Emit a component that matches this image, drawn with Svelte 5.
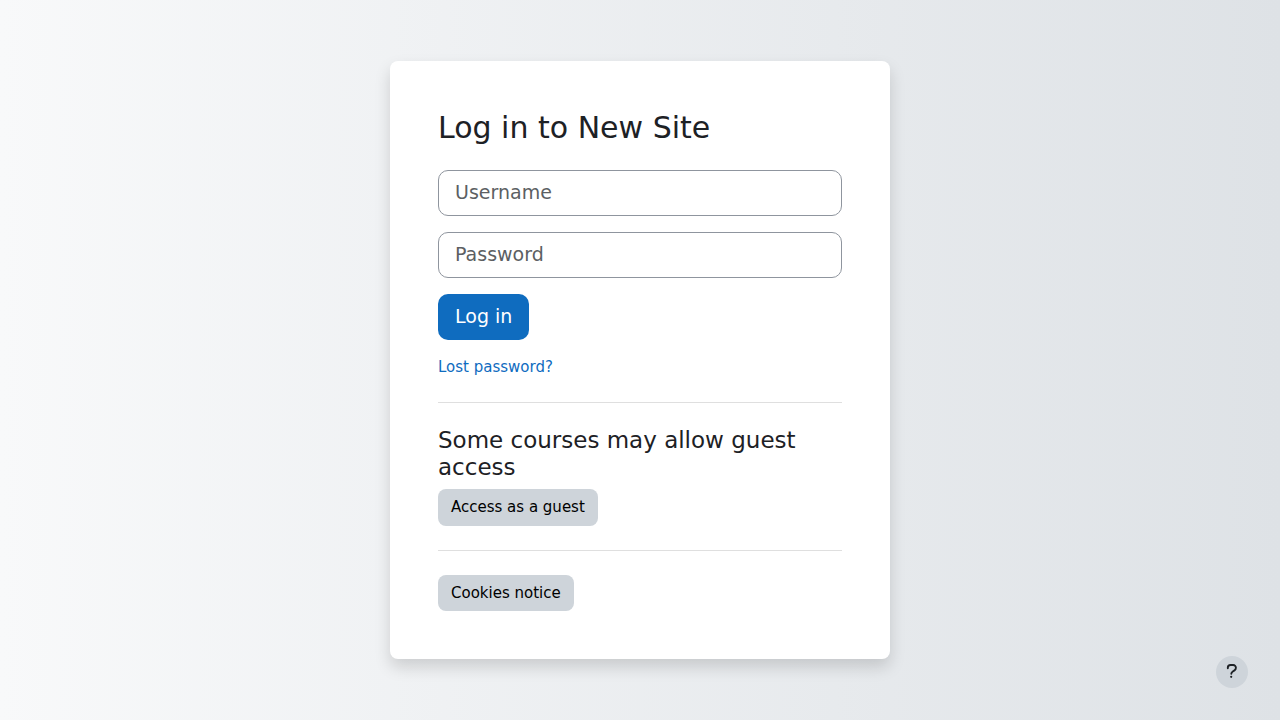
<script>
  let username = $state('');
  let password = $state('');
</script>

<div class="page">
  <main class="card">
    <h1>Log in to New Site</h1>
    <form onsubmit={(e) => e.preventDefault()}>
      <input type="text" aria-label="Username" placeholder="Username" autocomplete="username" bind:value={username} />
      <input type="password" aria-label="Password" placeholder="Password" autocomplete="current-password" bind:value={password} />
      <button class="btn primary" type="submit">Log in</button>
      <a href="#forgot">Lost password?</a>
    </form>
    <hr />
    <section>
      <h2>Some courses may allow guest access</h2>
      <button class="btn secondary" type="button">Access as a guest</button>
    </section>
    <hr />
    <button class="btn secondary" type="button">Cookies notice</button>
  </main>
  <button class="help" type="button" aria-label="Help">
    <svg viewBox="0 0 12 16" width="12" height="16" aria-hidden="true">
      <path d="M1.800 4.200V3.800A2.800 2.800 0 0 1 4.600 1H7.200A2.700 2.700 0 0 1 9.900 3.800C9.900 5 9.400 5.800 8.500 6.400L6.800 7.500C5.900 8.100 5.300 8.700 5.300 9.800" fill="none" stroke="currentColor" stroke-width="1.900" stroke-linecap="round" />
      <circle cx="5.200" cy="12.800" r="1.100" fill="currentColor" />
    </svg>
  </button>
</div>

<style>
  :global(body) {
    margin: 0;
  }
  .page {
    box-sizing: border-box;
    min-height: 100vh;
    display: flex;
    align-items: center;
    justify-content: center;
    padding: 24px;
    background: linear-gradient(to right, #f8f9fa, #dee2e6);
    color: #1d2125;
    font-family: "DejaVu Sans", sans-serif;
    font-size: 15px;
    line-height: 1.5;
  }
  .card {
    box-sizing: border-box;
    width: 100%;
    max-width: 500px;
    padding: 48px;
    border-radius: 8px;
    background: #fff;
    box-shadow: 0 8px 16px rgba(0, 0, 0, 0.15);
  }
  h1 {
    margin: 0 0 24px;
    font-size: 30px;
    font-weight: 400;
    line-height: 37px;
  }
  h2 {
    margin: 0 0 8px;
    font-size: 23px;
    font-weight: 400;
    line-height: 27px;
  }
  form {
    display: flex;
    flex-direction: column;
    align-items: flex-start;
    gap: 16px;
  }
  input,
  .primary {
    box-sizing: border-box;
    height: 46px;
    padding: 7px 16px 9px;
    border-radius: 10px;
    font: inherit;
    font-size: 19px;
    line-height: 28px;
  }
  input {
    width: 100%;
    border: 1px solid #8f959e;
    background: #fff;
    color: #495057;
  }
  input::placeholder {
    color: #5c5f63;
    opacity: 1;
  }
  a {
    color: #0f6cbf;
    text-decoration: none;
  }
  hr {
    margin: 24px 0;
    border: 0;
    border-top: 1px solid #dfdfdf;
  }
  .btn {
    display: block;
    border: 1px solid transparent;
    font-family: inherit;
    cursor: pointer;
  }
  .primary {
    background: #0f6cbf;
    color: #fff;
  }
  .secondary {
    padding: 6px 12px;
    border-radius: 8px;
    background: #ced4da;
    color: #000;
    font-size: 15px;
    line-height: 1.5;
  }
  .help {
    position: fixed;
    right: 32px;
    bottom: 32px;
    display: flex;
    align-items: center;
    justify-content: center;
    width: 32px;
    height: 32px;
    padding: 0;
    border: 0;
    border-radius: 50%;
    background: #ced4da;
    color: #1d2125;
    cursor: pointer;
  }
</style>
